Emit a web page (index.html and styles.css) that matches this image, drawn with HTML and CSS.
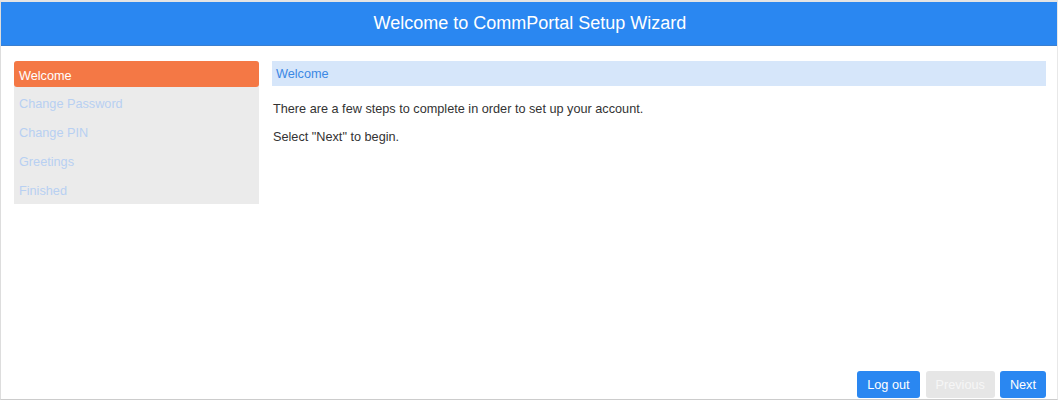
FILE: index.html
```html
<!DOCTYPE html>
<html>
<head>
<meta charset="utf-8">
<link rel="stylesheet" href="styles.css">
</head>
<body>
<div class="frame">
  <header class="topbar">Welcome to CommPortal Setup Wizard</header>
  <div class="main">
    <nav class="steps">
      <div class="step active">Welcome</div>
      <div class="step">Change Password</div>
      <div class="step">Change PIN</div>
      <div class="step">Greetings</div>
      <div class="step">Finished</div>
    </nav>
    <section class="content">
      <div class="content-title">Welcome</div>
      <p class="text">There are a few steps to complete in order to set up your account.</p>
      <p class="text">Select "Next" to begin.</p>
    </section>
  </div>
  <footer class="actions">
    <button class="btn primary logout">Log out</button>
    <button class="btn disabled">Previous</button>
    <button class="btn primary">Next</button>
  </footer>
</div>
</body>
</html>
```
FILE: styles.css
```css
html, body {
  margin: 0;
  padding: 0;
  background: #ffffff;
}
body {
  font-family: "Liberation Sans", Arial, sans-serif;
  font-size: 12.7px;
  color: #333333;
}
.frame {
  width: 1056px;
  height: 397px;
  border-top: 2px solid #e4e4e4;
  border-left: 1px solid #dddddd;
  border-right: 1px solid #e8e8e8;
  border-bottom: 1px solid #cccccc;
  display: flex;
  flex-direction: column;
}
.topbar {
  height: 44px;
  background: #2a87f1;
  color: #ffffff;
  font-size: 18px;
  display: flex;
  align-items: center;
  justify-content: center;
  border-bottom: 1px solid #3a7fd0;
  box-sizing: border-box;
  padding-left: 2px;
}
.main {
  flex: 1;
  display: flex;
  gap: 13px;
  padding: 15px 11px 0 13px;
}
.steps {
  width: 245px;
  height: 143px;
  background: #ebebeb;
  border-radius: 3px 3px 0 0;
  display: flex;
  flex-direction: column;
}
.step {
  height: 29px;
  line-height: 33px;
  padding-left: 5px;
  color: #b8d0f2;
}
.step.active {
  height: 26px;
  line-height: 31px;
  background: #f47845;
  color: #ffffff;
  border-radius: 3px;
  margin-bottom: 1px;
}
.content {
  flex: 1;
}
.content-title {
  height: 25px;
  line-height: 27px;
  background: #d6e6fa;
  color: #3b88e4;
  padding-left: 4px;
}
.text {
  margin: 15px 0 0 1px;
  line-height: 16px;
}
.text + .text {
  margin-top: 12px;
}
.actions {
  display: flex;
  justify-content: flex-end;
  gap: 5px;
  padding: 0 11px 1px 0;
}
.btn {
  height: 27px;
  border: none;
  border-radius: 3px;
  font-family: "Liberation Sans", Arial, sans-serif;
  font-size: 12.7px;
  padding: 0 10px;
  color: #ffffff;
}
.btn.primary {
  background: #2a87f1;
}
.btn.logout {
  margin-right: 1px;
}
.btn.disabled {
  background: #e6e6e6;
  color: #f6f6f6;
  padding: 0 10px;
}
```
